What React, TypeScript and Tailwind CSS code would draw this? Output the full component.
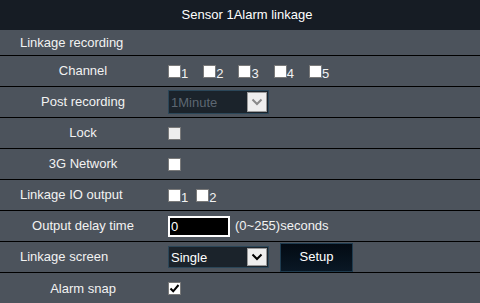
import React from 'react';

const Box: React.FC<{ checked?: boolean; disabled?: boolean }> = ({ checked, disabled }) => (
  <span
    className={`inline-flex items-center justify-center w-[13px] h-[13px] border border-[#7a7a7a] ${
      disabled ? 'bg-[#ededed]' : 'bg-white'
    }`}
  >
    {checked && (
      <svg width="11" height="11" viewBox="0 0 11 11">
        <path d="M1.5 5.5 L4.2 8.3 L9.5 2" fill="none" stroke="#000" strokeWidth="2" />
      </svg>
    )}
  </span>
);

const Num: React.FC<{ n: string }> = ({ n }) => (
  <span className="inline-flex items-end">
    <Box />
    <span className="leading-[13px] translate-y-[2px]">{n}</span>
  </span>
);

const Chevron: React.FC<{ color: string }> = ({ color }) => (
  <svg width="12" height="8" viewBox="0 0 12 8">
    <path d="M1.5 1.5 L6 6 L10.5 1.5" fill="none" stroke={color} strokeWidth="2" />
  </svg>
);

const Select: React.FC<{ value: string; disabled?: boolean; h: string }> = ({ value, disabled, h }) => (
  <div className={`flex w-[101px] ${h} bg-[#1b232b] border border-[#2b4658]`}>
    <span className={`flex-1 pl-[2px] leading-none flex items-center ${disabled ? 'text-[#5d6772]' : 'text-white'}`}>
      {value}
    </span>
    <span className="w-[20px] m-[1px] bg-[#eeeeee] border border-[#9a9a9a] flex items-center justify-center">
      <Chevron color={disabled ? '#8a8a8a' : '#000'} />
    </span>
  </div>
);

const Row: React.FC<{ label: string; left?: boolean; last?: boolean; children?: React.ReactNode }> = ({
  label,
  left,
  last,
  children,
}) => (
  <div className={`flex items-center h-[31px] ${last ? 'h-[30px]' : 'border-b border-black'}`}>
    <div className={`w-[166px] ${left ? 'pl-5 text-left' : 'text-center'}`}>{label}</div>
    <div className="flex items-center pl-[2px]">{children}</div>
  </div>
);

export default function App() {
  return (
    <div
      className="w-[480px] h-[303px] bg-[#4c535c] text-[#f2f2f2] text-[13px] overflow-hidden"
      style={{ fontFamily: '"Liberation Sans", Arial, sans-serif' }}
    >
      <div className="h-[30px] bg-[#161c24] flex items-center justify-center pl-[14px] text-white">
        Sensor 1Alarm linkage
      </div>
      <div className="h-[26px] border-b border-black flex items-center pl-5">Linkage recording</div>
      <Row label="Channel">
        <div className="flex gap-[15px] items-end">
          <Num n="1" />
          <Num n="2" />
          <Num n="3" />
          <Num n="4" />
          <Num n="5" />
        </div>
      </Row>
      <Row label="Post recording">
        <Select value="1Minute" disabled h="h-[24px]" />
      </Row>
      <Row label="Lock">
        <Box disabled />
      </Row>
      <Row label="3G Network">
        <Box />
      </Row>
      <Row label="Linkage IO output" left>
        <div className="flex gap-[8px] items-end">
          <Num n="1" />
          <Num n="2" />
        </div>
      </Row>
      <Row label="Output delay time">
        <div className="w-[62px] h-[21px] bg-black border-2 border-white text-white leading-none flex items-center pl-[1px]">
          0
        </div>
        <span className="ml-[5px]">(0~255)seconds</span>
      </Row>
      <Row label="Linkage screen" left>
        <Select value="Single" h="h-[22px]" />
        <button className="ml-[11px] w-[73px] h-[29px] border border-[#1f3c50] bg-gradient-to-b from-[#030a13] to-[#0a1825] text-white">
          Setup
        </button>
      </Row>
      <Row label="Alarm snap" last>
        <Box checked />
      </Row>
    </div>
  );
}
